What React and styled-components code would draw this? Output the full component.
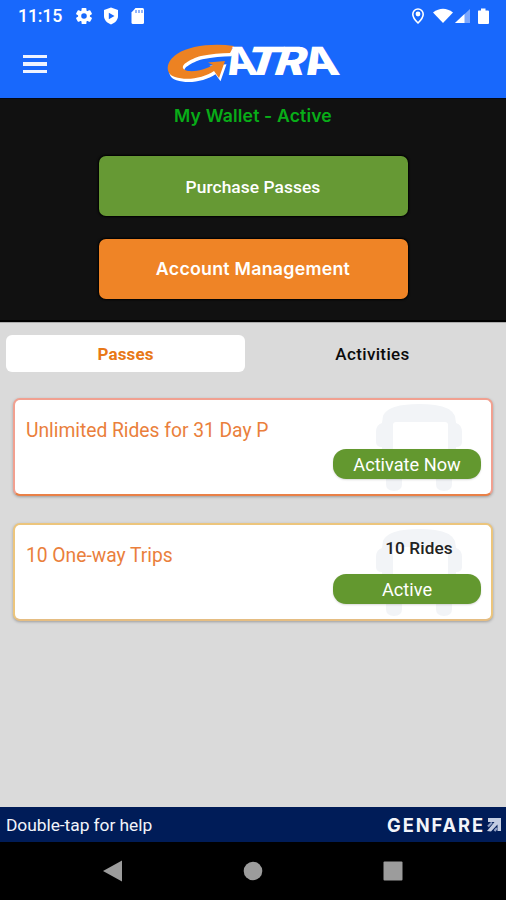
import React from 'react';
import styled, { createGlobalStyle } from 'styled-components';

const GlobalStyle = createGlobalStyle`
  * { box-sizing: border-box; }
  body { margin: 0; background: #000; }
  button { border: 0; padding: 0; margin: 0; font: inherit; }
  svg { display: block; }
`;

const Screen = styled.div`
  width: 506px;
  height: 900px;
  display: flex;
  flex-direction: column;
  overflow: hidden;
  font-family: Roboto, sans-serif;
  white-space: nowrap;
`;

const Header = styled.header`
  height: 98px;
  background: #1868fc;
  color: #fff;
`;

const StatusBar = styled.div`
  height: 32px;
  display: flex;
  align-items: center;
  justify-content: space-between;
  padding: 0 14px 0 18px;
`;

const Clock = styled.span`
  width: 57px;
  font-size: 17.8px;
  font-weight: 500;
  line-height: 32px;
  letter-spacing: -0.2px;
`;

const StatusGroup = styled.div`
  display: flex;
  align-items: center;
`;

const Toolbar = styled.div`
  height: 66px;
  display: grid;
  grid-template-columns: 167px 1fr;
  align-items: start;
`;

const MenuButton = styled.button`
  width: 24px;
  height: 18px;
  margin: 23px 0 0 23px;
  display: flex;
  flex-direction: column;
  justify-content: space-between;
  background: none;
`;

const MenuLine = styled.span`
  width: 24px;
  height: 3.4px;
  background: #eef3ff;
`;

const LogoBox = styled.div`
  padding-top: 10px;
`;

const LogoDrawing = styled.svg`
  overflow: visible;
`;

const LogoLetter = styled.text`
  font-family: Inter, sans-serif;
  font-size: 39px;
  font-weight: 800;
  fill: #fff;
`;

const Wallet = styled.section`
  height: 224px;
  background: #111;
  border-top: 1px solid #020817;
  border-bottom: 2px solid #000;
  display: flex;
  flex-direction: column;
  align-items: center;
`;

const WalletTitle = styled.h1`
  margin: 6px 0 29px;
  height: 22px;
  line-height: 22px;
  font-family: Inter, sans-serif;
  font-size: 17.6px;
  font-weight: 600;
  letter-spacing: 0.15px;
  color: #08ad18;
`;

const WideButton = styled.button`
  width: 309px;
  height: 60px;
  flex: none;
  margin-bottom: 23px;
  border-radius: 7px;
  background: ${(p) => p.$color};
  color: #fff;
  font-family: ${(p) => p.$font};
  font-size: ${(p) => p.$size}px;
  font-weight: ${(p) => p.$weight};
  letter-spacing: ${(p) => p.$spacing}px;
  line-height: 20px;
  padding-top: ${(p) => p.$drop || 0}px;
  box-shadow: 0 0 2px 1px #000;
`;

const Content = styled.main`
  height: 485px;
  background: #dadada;
  border-top: 1px solid #aaa;
  padding: 12px 13px 0;
`;

const Tabs = styled.div`
  display: grid;
  grid-template-columns: 239px 239px;
  gap: 8px;
  margin: 0 -7px 26px;
`;

const Tab = styled.button`
  height: 37px;
  padding-top: 1px;
  border-radius: 6px;
  background: ${(p) => (p.$active ? '#fff' : 'transparent')};
  color: ${(p) => (p.$active ? '#e87817' : '#0b0b0b')};
  font-size: 17px;
  font-weight: ${(p) => (p.$active ? 700 : 500)};
  letter-spacing: ${(p) => (p.$active ? 0.15 : 0.35)}px;
`;

const Card = styled.article`
  position: relative;
  height: 98px;
  margin-bottom: 27px;
  border: 2px solid ${(p) => p.$edge};
  border-bottom-color: ${(p) => p.$base};
  border-radius: 7px;
  background: #fff;
  box-shadow: 0 1px 3px rgba(0, 0, 0, 0.28);
  display: grid;
  grid-template-columns: 1fr 148px;
  padding: 0 10px 0 11px;
`;

const PassName = styled.h2`
  margin: 18px 0 0;
  line-height: 26px;
  font-size: 19.3px;
  font-weight: 400;
  letter-spacing: -0.03px;
  color: #ea7f3c;
`;

const PassSide = styled.div`
  position: relative;
  display: flex;
  flex-direction: column;
  align-items: center;
`;

const RideCount = styled.div`
  height: 49px;
  padding: 13px 0 0 24px;
  line-height: 21px;
  font-size: 17.2px;
  font-weight: 500;
  letter-spacing: 0.1px;
  color: #222;
`;

const Pill = styled.button`
  width: 148px;
  height: 30px;
  border-radius: 13px;
  background: #63982f;
  color: #fff;
  font-size: 18.2px;
  line-height: 31px;
  box-shadow: 0 1px 2px rgba(0, 0, 0, 0.15);
`;

const Watermark = styled.svg`
  position: absolute;
  top: 4px;
  right: 28px;
`;

const Footer = styled.footer`
  height: 35px;
  background: #001c58;
  color: #f2f4fa;
  display: flex;
  align-items: center;
  justify-content: space-between;
  padding: 0 5px 0 6px;
`;

const Help = styled.span`
  padding-top: 2px;
  font-size: 17.4px;
  line-height: 33px;
  letter-spacing: -0.05px;
`;

const Brand = styled.div`
  display: flex;
  align-items: center;
  gap: 2px;
  font-family: Inter, sans-serif;
  font-size: 18.3px;
  font-weight: 700;
  letter-spacing: 1.9px;
`;

const NavBar = styled.nav`
  height: 58px;
  background: #000;
  display: grid;
  grid-template-columns: repeat(3, 140px);
  justify-content: center;
  align-items: center;
  justify-items: center;
`;

const LeftIcons = styled(StatusGroup)`
  gap: 10px;
  margin-right: auto;
`;

const SWOOSH =
  'M67 4C45 1 22 4 10 12C-2 20 -2 32 8 35C20 39 37 36 47 29L52 36L58 19L41 20.500L46 23C38 28 24 31 18 28C11 24 23 17 34 14C44 12 54 11 63 11Z';

function GatraLogo() {
  return (
    <LogoDrawing width="180" height="42" viewBox="0 0 180 42">
      <path d={SWOOSH} transform="translate(1.500 3.200)" fill="#fff" />
      <path d={SWOOSH} fill="#ed8222" />
      <LogoLetter transform="translate(61 33) skewX(12)" textLength="31" lengthAdjust="spacingAndGlyphs">A</LogoLetter>
      <LogoLetter transform="translate(76 33) skewX(-18)" textLength="34" lengthAdjust="spacingAndGlyphs">T</LogoLetter>
      <LogoLetter transform="translate(105 33) skewX(-18)" textLength="31" lengthAdjust="spacingAndGlyphs">R</LogoLetter>
      <LogoLetter transform="translate(139 33) skewX(12)" textLength="35" lengthAdjust="spacingAndGlyphs">A</LogoLetter>
    </LogoDrawing>
  );
}

function SettingsIcon() {
  return (
    <svg width="18" height="18" viewBox="2 2 20 20">
      <g fill="#fff">
        {[0, 60, 120].map((angle) => (
          <rect key={angle} x="9.300" y="3" width="5.400" height="18" rx="1" transform={`rotate(${angle} 12 12)`} />
        ))}
        <circle cx="12" cy="12" r="6.600" />
      </g>
      <circle cx="12" cy="12" r="3.100" fill="#1868fc" />
    </svg>
  );
}

function ShieldIcon() {
  return (
    <svg width="16" height="18" viewBox="0 0 16 18">
      <path d="M8 .5L15 3v6c0 4-3 7-7 8.500C4 16 1 13 1 9V3z" fill="#fff" />
      <path d="M5.800 5.700L11.500 9l-5.700 3.300z" fill="#1868fc" />
    </svg>
  );
}

function StorageIcon() {
  return (
    <svg width="16" height="16" viewBox="-2 0 16 16">
      <path d="M4.500 0h7q1.500 0 1.500 1.500v13q0 1.500-1.500 1.500H2Q.5 16 .5 14.500V4.500z" fill="#fff" />
      <path d="M5 2v3M8 2v3M11 2v3" stroke="#6d9dfc" strokeWidth="1.500" />
    </svg>
  );
}

function SystemIcons() {
  return (
    <svg width="82" height="20" viewBox="0 0 82 20">
      <path d="M8 3a5.200 5.200 0 0 1 5.200 5.200C13.200 12 8 17 8 17S2.800 12 2.800 8.200A5.200 5.200 0 0 1 8 3z" fill="none" stroke="#fff" strokeWidth="1.600" />
      <circle cx="8" cy="8" r="2.400" fill="#fff" />
      <path d="M23 6.500Q33 -1 43 6.500L33 17z" fill="#fff" />
      <path d="M45 17L60 3v14z" fill="#7ba7fd" />
      <path d="M45 17l9.500-9v9z" fill="#fff" />
      <path d="M68.500 4.500h2.500V2.500h4.500v2H78q1 0 1 1V17q0 1-1 1h-9q-1 0-1-1V5.500q0-1 .5-1z" fill="#fff" />
    </svg>
  );
}

function Bus() {
  return (
    <Watermark width="88" height="88" viewBox="0 0 88 88">
      <path d="M29 1Q44 -1 60 1Q76 3 80 12L81 19Q87 21 87 28V38Q87 43 81 43V74H77V80Q77 87 69 87Q61 87 61 80V74H27V80Q27 87 19 87Q11 87 11 80V74H7V43Q1 43 1 38V28Q1 21 7 19L8 12Q12 3 29 1Z" fill="#f2f4f7" />
      <rect x="18" y="18" width="55" height="38" rx="3" fill="#fff" />
    </Watermark>
  );
}

function PassCard({ name, rides, action, edge, base }) {
  return (
    <Card $edge={edge} $base={base}>
      <Bus />
      <PassName>{name}</PassName>
      <PassSide>
        <RideCount>{rides}</RideCount>
        <Pill>{action}</Pill>
      </PassSide>
    </Card>
  );
}

export default function App() {
  return (
    <>
      <GlobalStyle />
      <Screen>
        <Header>
          <StatusBar>
            <Clock>11:15</Clock>
            <LeftIcons>
              <SettingsIcon />
              <ShieldIcon />
              <StorageIcon />
            </LeftIcons>
            <SystemIcons />
          </StatusBar>
          <Toolbar>
            <MenuButton aria-label="Menu">
              <MenuLine />
              <MenuLine />
              <MenuLine />
            </MenuButton>
            <LogoBox>
              <GatraLogo />
            </LogoBox>
          </Toolbar>
        </Header>
        <Wallet>
          <WalletTitle>My Wallet - Active</WalletTitle>
          <WideButton $color="#669934" $font="Roboto, sans-serif" $size={17.4} $weight={500} $spacing={0.05} $drop={1}>Purchase Passes</WideButton>
          <WideButton $color="#ef8426" $font="Inter, sans-serif" $size={17.8} $weight={600} $spacing={0.25}>Account Management</WideButton>
        </Wallet>
        <Content>
          <Tabs>
            <Tab $active>Passes</Tab>
            <Tab>Activities</Tab>
          </Tabs>
          <PassCard name="Unlimited Rides for 31 Day P" action="Activate Now" edge="#f1a090" base="#e98047" />
          <PassCard name="10 One-way Trips" rides="10 Rides" action="Active" edge="#ecc57c" base="#e5bd82" />
        </Content>
        <Footer>
          <Help>Double-tap for help</Help>
          <Brand>
            GENFARE
            <svg width="14" height="14" viewBox="0 0 14 14">
              <path d="M1 0H14V13H10.500V6.500L4 13.500L0 13L7.500 4H1Z" fill="#c3cde2" />
              <path d="M1 8.500L5 4.500M7.500 13L10 10" stroke="#8fa0c6" strokeWidth="2.200" />
            </svg>
          </Brand>
        </Footer>
        <NavBar>
          <svg width="20" height="22" viewBox="0 0 20 22"><path d="M0 11L19 0.500V21.500Z" fill="#9c9c9c" /></svg>
          <svg width="20" height="20" viewBox="0 0 20 20"><circle cx="10" cy="10" r="9.300" fill="#9c9c9c" /></svg>
          <svg width="20" height="20" viewBox="0 0 20 20"><rect x="0.500" y="0.500" width="19" height="19" rx="1" fill="#9c9c9c" /></svg>
        </NavBar>
      </Screen>
    </>
  );
}
